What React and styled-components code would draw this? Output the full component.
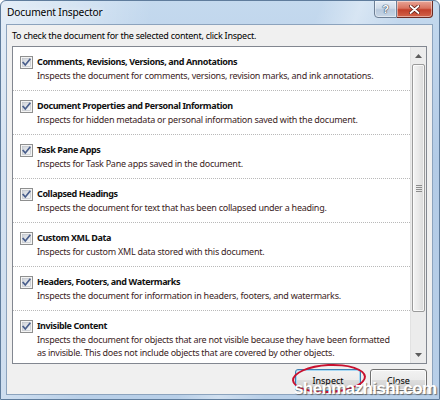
import React from "react";
import styled, { createGlobalStyle } from "styled-components";

const GlobalStyle = createGlobalStyle`
  html, body {
    margin: 0;
    padding: 0;
    width: 440px;
    height: 400px;
    overflow: hidden;
    background: #ffffff;
  }
  * {
    box-sizing: border-box;
  }
`;

const UI_FONT = `"Noto Sans", "Open Sans", sans-serif`;

const CHECKS = [
  {
    title: "Comments, Revisions, Versions, and Annotations",
    text: "Inspects the document for comments, versions, revision marks, and ink annotations.",
  },
  {
    title: "Document Properties and Personal Information",
    text: "Inspects for hidden metadata or personal information saved with the document.",
  },
  {
    title: "Task Pane Apps",
    text: "Inspects for Task Pane apps saved in the document.",
  },
  {
    title: "Collapsed Headings",
    text: "Inspects the document for text that has been collapsed under a heading.",
  },
  {
    title: "Custom XML Data",
    text: "Inspects for custom XML data stored with this document.",
  },
  {
    title: "Headers, Footers, and Watermarks",
    text: "Inspects the document for information in headers, footers, and watermarks.",
  },
  {
    title: "Invisible Content",
    text: "Inspects the document for objects that are not visible because they have been formatted as invisible. This does not include objects that are covered by other objects.",
  },
];

const Window = styled.div`
  position: relative;
  width: 440px;
  height: 400px;
  display: flex;
  flex-direction: column;
  border: 1px solid #5f7c9c;
  border-radius: 6px 6px 0 0;
  background:
    linear-gradient(100deg, rgba(255, 255, 255, 0.55) 0%, rgba(255, 255, 255, 0.25) 18%, rgba(255, 255, 255, 0) 30%),
    linear-gradient(110deg, rgba(255, 255, 255, 0) 55%, rgba(255, 255, 255, 0.35) 62%, rgba(255, 255, 255, 0) 70%),
    linear-gradient(180deg, #c4d9ee 0%, #b3cbe6 40%, #b8cfe8 100%);
  font-family: ${UI_FONT};
  overflow: hidden;
`;

const TitleBar = styled.div`
  height: 23px;
  display: flex;
  align-items: flex-start;
  padding: 0 6px 0 6px;
`;

const Caption = styled.div`
  flex: 1;
  margin-top: 4px;
  font-size: 10.2px;
  line-height: 14px;
  color: #000;
  letter-spacing: -0.15px;
  text-shadow: 0 0 6px rgba(255, 255, 255, 0.9);
`;

const CaptionButtons = styled.div`
  display: flex;
  margin-top: -1px;
`;

const CaptionButton = styled.div`
  width: ${({ $wide }) => ($wide ? "36px" : "23px")};
  height: 18px;
  display: flex;
  align-items: center;
  justify-content: center;
  border: 1px solid ${({ $danger }) => ($danger ? "#6b2a23" : "#6d7f95")};
  border-left-width: ${({ $danger }) => ($danger ? "0" : "1px")};
  border-radius: ${({ $danger }) => ($danger ? "0 0 4px 0" : "0 0 0 4px")};
  background: ${({ $danger }) =>
    $danger
      ? "linear-gradient(180deg, #e8a597 0%, #d9735f 45%, #c23f2a 55%, #d2634a 100%)"
      : "linear-gradient(180deg, #e4ecf5 0%, #cfdbe9 45%, #b7c8dc 55%, #c7d6e6 100%)"};
  box-shadow: inset 0 0 0 1px rgba(255, 255, 255, 0.45);
`;

const HelpGlyph = styled.span`
  font-family: "Liberation Sans", sans-serif;
  font-weight: bold;
  font-size: 11px;
  line-height: 1;
  color: #ffffff;
  text-shadow: 0 0 1px #394b63, 0 0 1px #394b63, 0 0 1px #394b63;
`;

const Client = styled.div`
  flex: 1;
  display: flex;
  flex-direction: column;
  margin: 0 6px 4px 5px;
  padding: 4px 5px 3px;
  border: 1px solid #8ca3bd;
  background: #f0f0f0;
`;

const Prompt = styled.div`
  font-size: 9px;
  line-height: 14px;
  letter-spacing: -0.25px;
  color: #000;
  margin-bottom: 3px;
`;

const ListBox = styled.div`
  height: 318px;
  display: flex;
  border: 1px solid #828790;
  background: #ffffff;
  overflow: hidden;
`;

const Items = styled.div`
  flex: 1;
  min-width: 0;
`;

const Item = styled.div`
  display: flex;
  align-items: flex-start;
  gap: 4px;
  padding: 8px 12px 8px 7px;
  border-bottom: 1px dotted #b9b9b9;
`;

const Box = styled.svg`
  flex: none;
  margin-top: 1px;
`;

const ItemBody = styled.div`
  flex: 1;
  min-width: 0;
`;

const ItemTitle = styled.div`
  font-size: 9px;
  font-weight: bold;
  line-height: 14px;
  letter-spacing: -0.4px;
  color: #111;
`;

const ItemText = styled.div`
  font-size: 9px;
  line-height: 13px;
  letter-spacing: -0.25px;
  color: #3b2424;
`;

const ScrollBar = styled.div`
  width: 16px;
  flex: none;
  display: flex;
  flex-direction: column;
  background: #ececec;
  border-left: 1px solid #e2e2e2;
`;

const ArrowButton = styled.div`
  height: 17px;
  display: flex;
  align-items: center;
  justify-content: center;
`;

const Track = styled.div`
  flex: 1;
  padding: 0 1px;
`;

const Thumb = styled.div`
  height: 248px;
  display: flex;
  align-items: center;
  justify-content: center;
  border: 1px solid #9b9b9b;
  border-radius: 2px;
  background: linear-gradient(90deg, #f4f4f4 0%, #e9e9e9 50%, #d9d9d9 100%);
  box-shadow: inset 0 0 0 1px rgba(255, 255, 255, 0.7);
`;

const Grip = styled.div`
  width: 6px;
  height: 7px;
  background: repeating-linear-gradient(180deg, #8d8d8d 0, #8d8d8d 1px, transparent 1px, transparent 2px);
`;

const Footer = styled.div`
  display: flex;
  justify-content: flex-end;
  gap: 9px;
  margin-top: auto;
`;

const Button = styled.div`
  position: relative;
  width: ${({ $width }) => $width}px;
  height: 22px;
  display: flex;
  align-items: center;
  justify-content: center;
  border: 1px solid ${({ $default }) => ($default ? "#3c7fb1" : "#707070")};
  border-radius: 3px;
  background: linear-gradient(180deg, #f2f2f2 0%, #ebebeb 48%, #dddddd 52%, #cfcfcf 100%);
  box-shadow: inset 0 0 0 1px ${({ $default }) => ($default ? "#a7d8f3" : "rgba(255,255,255,0.8)")};
  font-size: 9px;
  color: #000;
`;

const Ring = styled.div`
  position: absolute;
  left: -4px;
  top: -6px;
  width: 74px;
  height: 29px;
  border: 2px solid #c8102e;
  border-radius: 50%;
  transform: rotate(-3deg);
  pointer-events: none;
`;

const Watermark = styled.div`
  position: absolute;
  left: 293px;
  top: 378px;
  font-family: "Liberation Sans", Arial, sans-serif;
  font-weight: bold;
  font-size: 17px;
  letter-spacing: -0.6px;
  color: #ffffff;
  text-shadow: 1px 1px 1px rgba(90, 90, 90, 0.8);
  pointer-events: none;
`;

function CheckBox() {
  return (
    <Box width="13" height="13" viewBox="0 0 13 13">
      <defs>
        <linearGradient id="boxFill" x1="0" y1="0" x2="1" y2="1">
          <stop offset="0" stopColor="#cfd3d9" />
          <stop offset="1" stopColor="#f6f7f8" />
        </linearGradient>
      </defs>
      <rect x="0.5" y="0.5" width="12" height="12" fill="#f4f4f4" stroke="#8e8f8f" />
      <rect x="2.5" y="2.5" width="8" height="8" fill="url(#boxFill)" stroke="#b7bcc4" strokeWidth="0.6" />
      <path d="M3.2 6.6 L5.3 9 L9.8 3.4" fill="none" stroke="#4a5f8c" strokeWidth="1.7" strokeLinecap="square" />
    </Box>
  );
}

function Arrow({ up }) {
  return (
    <svg width="7" height="4" viewBox="0 0 7 4">
      <path d={up ? "M0 4 L3.5 0 L7 4 Z" : "M0 0 L3.5 4 L7 0 Z"} fill="#5c5c5c" />
    </svg>
  );
}

export default function App() {
  return (
    <>
      <GlobalStyle />
      <Window>
        <TitleBar>
          <Caption>Document Inspector</Caption>
          <CaptionButtons>
            <CaptionButton>
              <HelpGlyph>?</HelpGlyph>
            </CaptionButton>
            <CaptionButton $wide $danger>
              <svg width="11" height="9" viewBox="0 0 11 9">
                <path d="M1.5 1 L9.5 8 M9.5 1 L1.5 8" stroke="#5a1d16" strokeWidth="3.4" strokeLinecap="round" />
                <path d="M1.5 1 L9.5 8 M9.5 1 L1.5 8" stroke="#ffffff" strokeWidth="1.8" strokeLinecap="round" />
              </svg>
            </CaptionButton>
          </CaptionButtons>
        </TitleBar>

        <Client>
          <Prompt>To check the document for the selected content, click Inspect.</Prompt>
          <ListBox>
            <Items>
              {CHECKS.map((c) => (
                <Item key={c.title}>
                  <CheckBox />
                  <ItemBody>
                    <ItemTitle>{c.title}</ItemTitle>
                    <ItemText>{c.text}</ItemText>
                  </ItemBody>
                </Item>
              ))}
            </Items>
            <ScrollBar>
              <ArrowButton>
                <Arrow up />
              </ArrowButton>
              <Track>
                <Thumb>
                  <Grip />
                </Thumb>
              </Track>
              <ArrowButton>
                <Arrow />
              </ArrowButton>
            </ScrollBar>
          </ListBox>
          <Footer>
            <Button $width={66} $default>
              Inspect
              <Ring />
            </Button>
            <Button $width={57}>Close</Button>
          </Footer>
        </Client>
        <Watermark>shenmazhishi.com</Watermark>
      </Window>
    </>
  );
}
